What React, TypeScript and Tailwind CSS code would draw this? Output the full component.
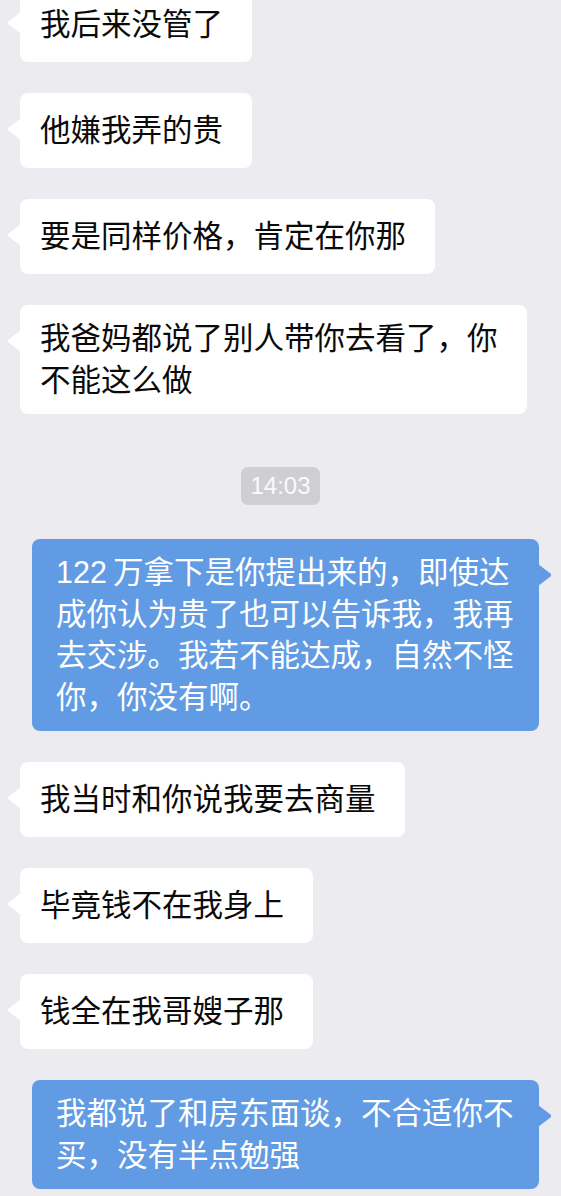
type Msg =
    | {kind: 'in'; text: string}
    | {kind: 'out'; text: string}
    | {kind: 'time'; text: string}

const messages: Msg[] = [
    {kind: 'in', text: '我后来没管了'},
    {kind: 'in', text: '他嫌我弄的贵'},
    {kind: 'in', text: '要是同样价格，肯定在你那'},
    {kind: 'in', text: '我爸妈都说了别人带你去看了，你不能这么做'},
    {kind: 'time', text: '14:03'},
    {kind: 'out', text: '122\u2009万拿下是你提出来的，即使达成你认为贵了也可以告诉我，我再去交涉。我若不能达成，自然不怪你，你没有啊。'},
    {kind: 'in', text: '我当时和你说我要去商量'},
    {kind: 'in', text: '毕竟钱不在我身上'},
    {kind: 'in', text: '钱全在我哥嫂子那'},
    {kind: 'out', text: '我都说了和房东面谈，不合适你不买，没有半点勉强'},
]

function Incoming({text}: {text: string}) {
    return (
        <div className="relative self-start ml-[20px] max-w-[507px] min-h-[75px] flex items-center rounded-[8px] bg-white pl-[20px] pr-[29px] py-[13px] text-[30.5px] leading-[41.5px] text-[#0a0a0a]">
            <svg className="absolute left-[-13px] top-[25px]" width="14" height="22" viewBox="0 0 14 22">
                <path d="M14 0 L1.6 9.6 Q0 11 1.6 12.4 L14 22 Z" fill="#ffffff"/>
            </svg>
            <span>{text}</span>
        </div>
    )
}

function Outgoing({text}: {text: string}) {
    return (
        <div className="relative self-end mr-[22px] max-w-[507px] min-h-[75px] flex items-center rounded-[8px] bg-[#619be3] pl-[24px] pr-[24px] py-[13px] text-[30.5px] leading-[41.5px] text-white">
            <svg className="absolute right-[-13px] top-[25px]" width="14" height="22" viewBox="0 0 14 22">
                <path d="M0 0 L12.4 9.6 Q14 11 12.4 12.4 L0 22 Z" fill="#619be3"/>
            </svg>
            <span>{text}</span>
        </div>
    )
}

function TimeStamp({text}: {text: string}) {
    return (
        <div className="self-center mt-[22px] mb-[3px] h-[38px] px-[9px] flex items-center rounded-[7px] bg-[#cfcfd3] text-[24px] text-[#fafafa]">
            {text}
        </div>
    )
}

export default function App() {
    return (
        <div className="w-[561px] h-[1196px] overflow-hidden bg-[#ebebf0] font-['Liberation_Sans','Noto_Sans_CJK_SC',sans-serif]">
            <div className="flex flex-col gap-[31px] mt-[-13px]">
                {messages.map((m, i) => {
                    if (m.kind === 'in') return <Incoming key={i} text={m.text}/>
                    if (m.kind === 'out') return <Outgoing key={i} text={m.text}/>
                    return <TimeStamp key={i} text={m.text}/>
                })}
            </div>
        </div>
    )
}
